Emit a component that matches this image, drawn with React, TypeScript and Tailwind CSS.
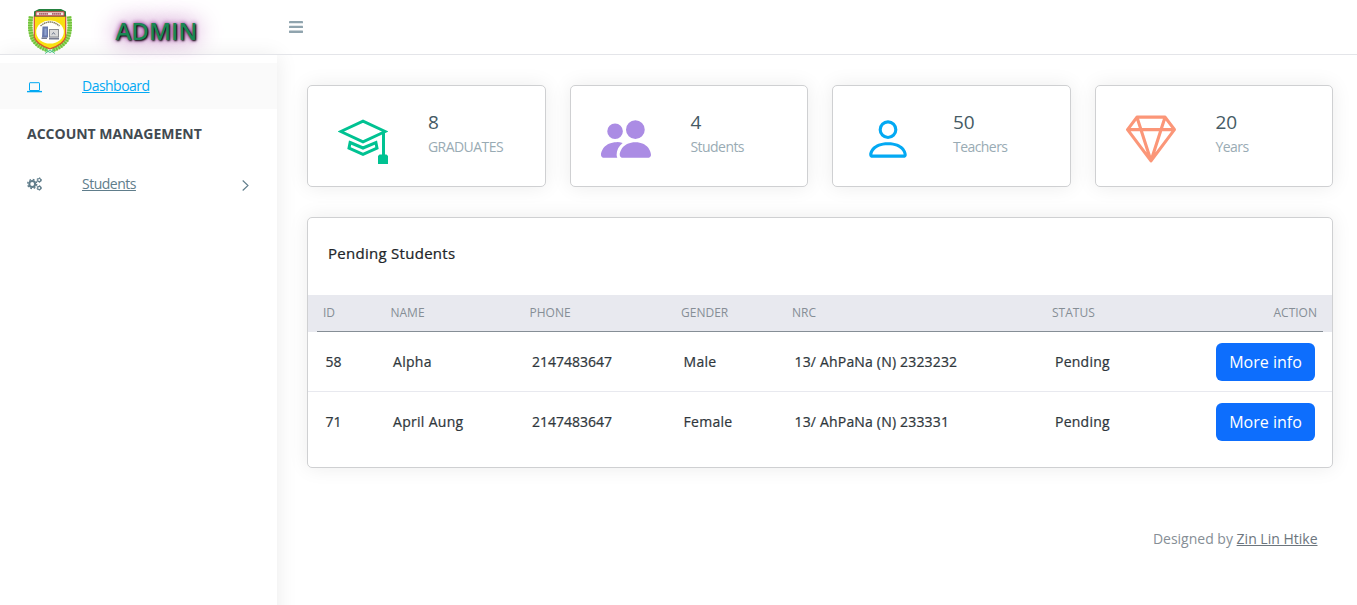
import React from "react";
import { BsPeopleFill, BsPerson, BsGem } from "react-icons/bs";

function Logo() {
  return (
    <svg className="block h-[45px] w-11" viewBox="0 0 44 45">
      <g fill="none" stroke="#a3da6e" strokeWidth="4.2">
        <path d="M3 7.5 Q0.5 23 6 32 Q12 39 20 41" />
        <path d="M41 7.5 Q43.5 23 38 32 Q32 39 24 41" />
      </g>
      <g fill="none" stroke="#6cc23a" strokeWidth="4.6" strokeDasharray="1.5 1.1">
        <path d="M3 7.5 Q0.5 23 6 32 Q12 39 20 41" />
        <path d="M41 7.5 Q43.5 23 38 32 Q32 39 24 41" />
      </g>
      <path d="M17 44.5 L22 41 L27 44.5 M17.5 41 L22 43.5 L26.5 41" fill="none" stroke="#4cc58a" strokeWidth="1" />
      <path d="M6.3 7 H37.7 V28 Q35 36 22 39.8 Q9 36 6.3 28 Z" fill="#f8e012" stroke="#d9502f" strokeWidth="1.2" />
      <path d="M11 0 H33 L38 2.5 V7.5 H6 V2.5 Z" fill="#24813f" />
      <path d="M8 2.8 H36 V6.8 H8 Z" fill="#efe6e4" stroke="#cb3c40" strokeWidth="1" />
      <path d="M11 4.9 H20 M24 4.9 H33" stroke="#a86a70" strokeWidth="1.8" strokeDasharray="1.7 0.3" />
      <ellipse cx="22" cy="23" rx="13.8" ry="11.6" fill="#fffffb" />
      <path d="M12.5 17 Q22 9 31.5 17" fill="none" stroke="#898365" strokeWidth="1.5" strokeDasharray="1.5 0.5" />
      <path d="M14.5 17.5 h5.5 v11 h-6 z" fill="#6879ab" />
      <path d="M16.4 19.5 h2.2 v7 h-2.2z" fill="#8fa3cf" />
      <rect x="21.5" y="20.5" width="9" height="7.5" fill="#dadada" stroke="#898c91" />
      <path d="M24 25.5 l1.5-2 1.5 2" fill="none" stroke="#6d788d" />
      <path d="M13.5 29.3 H19 M21 29.6 H31" stroke="#777c8f" strokeWidth="1.6" />
    </svg>
  );
}

function GraduationCap() {
  return (
    <svg className="block size-[50px]" viewBox="0 0 50 50" fill="none" stroke="#00c292" strokeWidth="3">
      <path d="M2.8 17.5 L25 7.2 L47.2 17.5 L25 27.8 Z" />
      <path d="M12.1 28.5 L25 34 L37.9 28.5 L39 34.2 L25 40.4 L11 34.2 Z" />
      <path d="M45.5 18 V42" />
      <path d="M41.5 40.5 h7 l1.5 1.5 V50 H40 v-8z" fill="#00c292" stroke="none" />
    </svg>
  );
}

function Cogs() {
  return (
    <svg className="block h-[14px] w-[15px]" viewBox="0 0 15 14" fill="none" stroke="currentColor">
      <circle cx="5.2" cy="7" r="2.9" strokeWidth="2" />
      <circle cx="5.2" cy="7" r="4.5" strokeWidth="1.4" strokeDasharray="1.77 1.77" />
      <circle cx="12.2" cy="3.1" r="1.6" strokeWidth="1.2" />
      <circle cx="12.2" cy="3.1" r="2.4" strokeWidth="0.8" strokeDasharray="1.25 1.25" />
      <circle cx="12.2" cy="10.9" r="1.6" strokeWidth="1.2" />
      <circle cx="12.2" cy="10.9" r="2.4" strokeWidth="0.8" strokeDasharray="1.25 1.25" />
    </svg>
  );
}

const stats = [
  { value: "8", label: "GRADUATES", icon: <GraduationCap /> },
  { value: "4", label: "Students", icon: <BsPeopleFill className="block size-[50px] text-[#ab8ce4]" /> },
  { value: "50", label: "Teachers", icon: <BsPerson className="block size-[50px] text-[#03a9f3]" /> },
  { value: "20", label: "Years", icon: <BsGem className="block size-[50px] text-[#fb9678]" /> },
];

const students = [
  { id: "58", name: "Alpha", phone: "2147483647", gender: "Male", nrc: "13/ AhPaNa (N) 2323232" },
  { id: "71", name: "April Aung", phone: "2147483647", gender: "Female", nrc: "13/ AhPaNa (N) 233331" },
];

const columns = "grid grid-cols-[67.5px_139px_151.5px_111px_260px_1fr_auto] items-center";

export default function App() {
  return (
    <div className="flex h-[605px] flex-col overflow-hidden bg-white font-['Open_Sans',sans-serif] text-[#607d8b]">
      <header className="relative z-10 flex h-[55px] shrink-0 items-start border-b border-[#e4e5e9] pl-7">
        <div className="pt-[9px]">
          <Logo />
        </div>
        <div className="ml-[43.5px] mt-[13px] w-[83.5px] text-[24px] leading-9 font-semibold text-[#198754] [text-shadow:1px_1px_2px_black,0_0_25px_purple,0_0_5px_purple]">
          ADMIN
        </div>
        <svg className="ml-[90px] mt-[21px] h-3 w-[14px]" viewBox="0 0 14 12" fill="#90a4ae">
          <rect width="14" height="2.3" rx="0.4" />
          <rect y="4.8" width="14" height="2.3" rx="0.4" />
          <rect y="9.6" width="14" height="2.3" rx="0.4" />
        </svg>
      </header>
      <div className="flex min-h-0 flex-1">
        <aside className="-mb-10 w-[277px] shrink-0 pt-2 shadow-[1px_0_20px_rgba(0,0,0,0.08)]">
          <a className="flex h-[46px] items-center bg-[#fafafa] pl-[27px] text-[#03a9f3]">
            <svg className="mt-[3px] h-[11px] w-[15px]" viewBox="0 0 15 11" fill="none" stroke="currentColor">
              <rect x="2.5" y="0.7" width="10" height="7.8" rx="0.5" />
              <path d="M0 9.6 H15" strokeWidth="1.4" />
            </svg>
            <span className="ml-10 text-[14px] leading-5 tracking-[-0.52px] underline">Dashboard</span>
          </a>
          <div className="flex h-[50px] items-center pb-0.5 pl-[27px] text-[14px] font-bold text-[#424a51]">ACCOUNT MANAGEMENT</div>
          <a className="flex h-[50px] items-center pl-[27px]">
            <Cogs />
            <span className="ml-10 text-[14px] leading-5 tracking-[-0.5px] underline">Students</span>
            <svg className="ml-auto mr-7 mt-[3px] h-[11px] w-[7px]" viewBox="0 0 7 11" fill="none" stroke="currentColor">
              <path d="M0.7 0.5 L6 5.5 L0.7 10.5" strokeWidth="1.1" />
            </svg>
          </a>
        </aside>
        <main className="flex-1 pl-[30px] pr-6 pt-[30px]">
          <div className="grid grid-cols-4 gap-x-6">
            {stats.map((s) => (
              <div key={s.label} className="flex h-[102px] rounded-[5px] border border-[#cfd0d2] bg-white pl-[30px] shadow-[0_0_20px_rgba(0,0,0,0.08)]">
                <div className="w-[50px] pt-7">{s.icon}</div>
                <div className="ml-10 pt-[22px]">
                  <div className="text-[19px] leading-7 text-[#455a64]">{s.value}</div>
                  <div className="text-[14px] leading-[22px] tracking-[-0.56px] text-[#99abb4]">{s.label}</div>
                </div>
              </div>
            ))}
          </div>
          <section className="mt-[30px] h-[251px] rounded-[5px] border border-[#cfd0d2] bg-white shadow-[0_0_20px_rgba(0,0,0,0.08)]">
            <h4 className="flex h-[77px] items-center pb-1.5 pl-5 text-[15px] tracking-[0.28px] text-[#212529] [-webkit-text-stroke:0.24px_#212529]">Pending Students</h4>
            <div className="bg-[#e8e9ef] px-[9px]">
              <div className={columns + " h-[37px] border-b border-[#868e96] pl-[6px] pr-[6px] text-[12px] text-[#868e96]"}>
                <span>ID</span>
                <span>NAME</span>
                <span>PHONE</span>
                <span>GENDER</span>
                <span>NRC</span>
                <span>STATUS</span>
                <span>ACTION</span>
              </div>
            </div>
            {students.map((s) => (
              <div key={s.id} className={columns + " h-[60px] border-b border-[#e8e9ef] pl-[17.5px] pr-[17px] text-[14px] text-[#2f373c] [-webkit-text-stroke:0.22px_#2f373c] last:border-transparent"}>
                <span>{s.id}</span>
                <span className="tracking-[0.3px]">{s.name}</span>
                <span>{s.phone}</span>
                <span className="tracking-[0.3px]">{s.gender}</span>
                <span className="tracking-[0.18px]">{s.nrc}</span>
                <span className="pl-[0.5px] tracking-[0.25px]">Pending</span>
                <button className="h-[38px] w-[99px] rounded-md bg-[#0d6efd] text-[16px] text-white [-webkit-text-stroke:0]">More info</button>
              </div>
            ))}
          </section>
          <footer className="mt-[60px] pr-[15.5px] text-right text-[14px] leading-[22px] text-[#868e96]">
            Designed by <a className="text-[#6c757d] underline">Zin Lin Htike</a>
          </footer>
        </main>
      </div>
    </div>
  );
}
